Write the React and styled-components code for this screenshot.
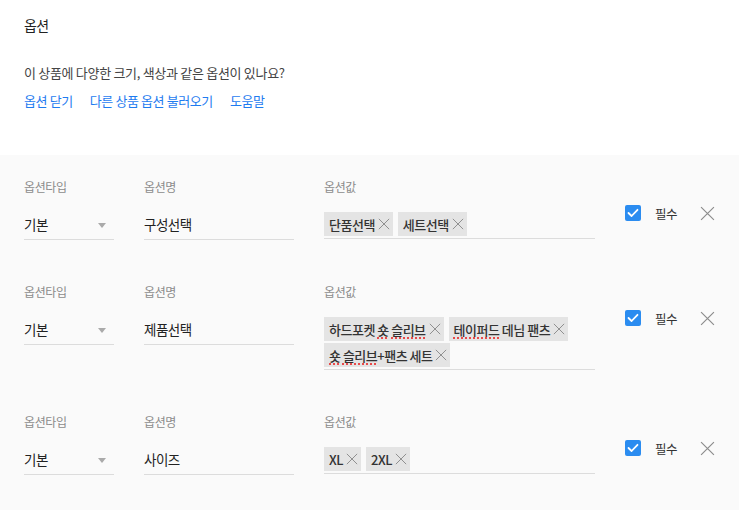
import React from "react";
import styled, { createGlobalStyle } from "styled-components";

const GlobalStyle = createGlobalStyle`
  html, body {
    margin: 0;
    padding: 0;
    background: #fafafa;
    font-family: "Noto Sans CJK KR", "Noto Sans", sans-serif;
  }
`;

const rows = [
    {
        type: "기본",
        name: "구성선택",
        values: [["단품선택"], ["세트선택"]],
    },
    {
        type: "기본",
        name: "제품선택",
        values: [
            ["하드포켓 ", { s: "숏" }, " ", { s: "슬리브" }],
            [{ s: "테이퍼드" }, " 데님 팬츠"],
            [{ s: "숏" }, " ", { s: "슬리브" }, "+팬츠 세트"],
        ],
    },
    {
        type: "기본",
        name: "사이즈",
        values: [["XL"], ["2XL"]],
    },
];

const CloseIcon = ({ size = 14, color = "#888", width = 1.2 }) => (
    <svg width={size} height={size} viewBox="0 0 14 14">
        <path d="M1 1 L13 13 M13 1 L1 13" stroke={color} strokeWidth={width} fill="none" />
    </svg>
);

const App = () => {
    return (
        <Page>
            <GlobalStyle />
            <Header>
                <Title>옵션</Title>
                <Question>이 상품에 다양한 크기, 색상과 같은 옵션이 있나요?</Question>
                <Links>
                    <Link>옵션 닫기</Link>
                    <Link>다른 상품 옵션 불러오기</Link>
                    <Link>도움말</Link>
                </Links>
            </Header>
            <Panel>
                {rows.map((row, i) => (
                    <Row key={i}>
                        <Col>
                            <Label>옵션타입</Label>
                            <Field>
                                {row.type}
                                <Caret />
                            </Field>
                        </Col>
                        <Col>
                            <Label>옵션명</Label>
                            <Field>{row.name}</Field>
                        </Col>
                        <Col>
                            <Label>옵션값</Label>
                            <TagBox>
                                {row.values.map((parts, j) => (
                                    <Tag key={j}>
                                        <span>
                                            {parts.map((p, k) =>
                                                typeof p === "string" ? (
                                                    p
                                                ) : (
                                                    <Spell key={k}>{p.s}</Spell>
                                                )
                                            )}
                                        </span>
                                        <CloseIcon size={12} color="#8a8a8a" width={1.1} />
                                    </Tag>
                                ))}
                            </TagBox>
                        </Col>
                        <Actions>
                            <Check>
                                <svg width="12" height="10" viewBox="0 0 12 10">
                                    <path d="M1.5 5 L4.6 8 L10.5 1.8" stroke="#fff" strokeWidth="1.8" fill="none" strokeLinecap="round" strokeLinejoin="round" />
                                </svg>
                            </Check>
                            <Required>필수</Required>
                            <Remove>
                                <CloseIcon size={15} color="#8c8c8c" width={1.1} />
                            </Remove>
                        </Actions>
                    </Row>
                ))}
            </Panel>
        </Page>
    );
};

const Page = styled.div`
    min-height: 100vh;
    background: #fafafa;
`;

const Header = styled.div`
    background: #fff;
    padding: 14px 24px 0;
    height: 141px;
`;

const Title = styled.div`
    font-size: 14px;
    line-height: 22px;
    color: #222;
    letter-spacing: -0.6px;
`;

const Question = styled.div`
    margin-top: 26px;
    font-size: 13px;
    line-height: 22px;
    color: #444;
    letter-spacing: -0.3px;
`;

const Links = styled.div`
    display: flex;
    gap: 17px;
    margin-top: 6px;
`;

const Link = styled.a`
    font-size: 13px;
    line-height: 22px;
    color: #1f7cf0;
    letter-spacing: -0.4px;
    cursor: pointer;
`;

const Panel = styled.div`
    background: #fafafa;
`;

const Row = styled.div`
    display: grid;
    grid-template-columns: 90px 150px 271px auto;
    column-gap: 30px;
    align-items: start;
    padding: 22px 24px 20px;
`;

const Col = styled.div`
    display: flex;
    flex-direction: column;
`;

const Label = styled.div`
    font-size: 12px;
    line-height: 20px;
    color: #8c8c8c;
    letter-spacing: -0.4px;
    margin-bottom: 12px;
`;

const Field = styled.div`
    position: relative;
    height: 30px;
    line-height: 31px;
    font-size: 13.5px;
    color: #222;
    letter-spacing: -0.5px;
    border-bottom: 1px solid #dcdcdc;
`;

const Caret = styled.span`
    position: absolute;
    right: 8px;
    top: 14px;
    width: 0;
    height: 0;
    border-left: 4.5px solid transparent;
    border-right: 4.5px solid transparent;
    border-top: 5px solid #aaa;
`;

const TagBox = styled.div`
    display: flex;
    flex-wrap: wrap;
    gap: 2px 5px;
    padding: 3px 0 2px;
    border-bottom: 1px solid #dcdcdc;
`;

const Tag = styled.div`
    display: flex;
    align-items: center;
    gap: 3px;
    height: 24px;
    padding: 0 3px 0 5px;
    background: #e4e4e4;
    font-size: 13px;
    font-weight: 500;
    color: #333;
    letter-spacing: -0.5px;
`;

const Spell = styled.span`
    text-decoration: underline dotted #e84a4a;
    text-decoration-thickness: 2px;
    text-underline-offset: 3px;
`;

const Actions = styled.div`
    display: flex;
    align-items: center;
    margin-top: 28px;
    height: 16px;
`;

const Check = styled.div`
    display: flex;
    align-items: center;
    justify-content: center;
    width: 16px;
    height: 16px;
    border-radius: 2px;
    background: #2b8cf0;
`;

const Required = styled.span`
    margin-left: 14px;
    font-size: 12.5px;
    color: #333;
    letter-spacing: -0.5px;
`;

const Remove = styled.span`
    display: flex;
    margin-left: 23px;
`;

export default App;
